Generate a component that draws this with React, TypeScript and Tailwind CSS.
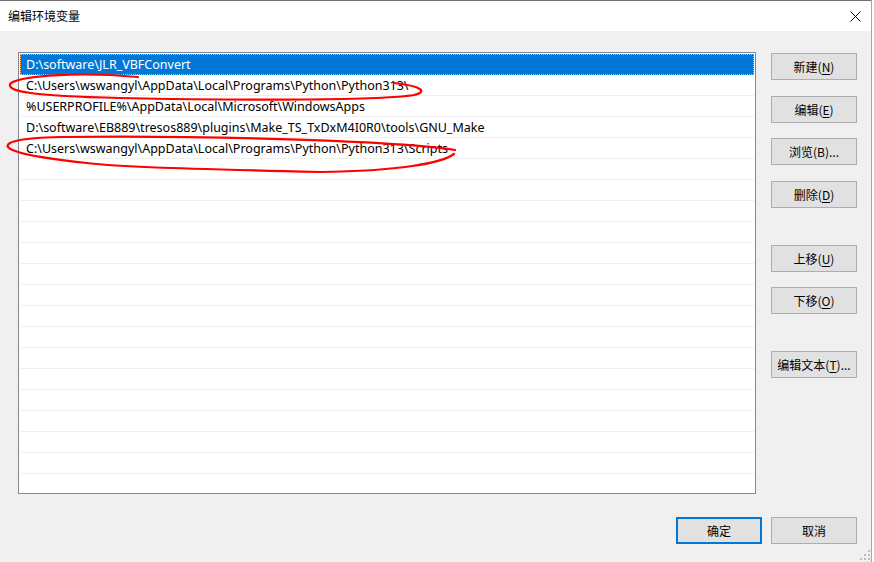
import React from "react";

const FONT = '"Segoe UI", "Noto Sans", "Noto Sans CJK SC", sans-serif';
const CJK = '"Noto Sans CJK SC", "Noto Sans", sans-serif';

const rows = [
  "D:\\software\\JLR_VBFConvert",
  "C:\\Users\\wswangyl\\AppData\\Local\\Programs\\Python\\Python313\\",
  "%USERPROFILE%\\AppData\\Local\\Microsoft\\WindowsApps",
  "D:\\software\\EB889\\tresos889\\plugins\\Make_TS_TxDxM4I0R0\\tools\\GNU_Make",
  "C:\\Users\\wswangyl\\AppData\\Local\\Programs\\Python\\Python313\\Scripts",
];

function Btn({
  label,
  hot,
  tail,
  className = "",
  primary = false,
}: {
  label: string;
  hot?: string;
  tail?: string;
  className?: string;
  primary?: boolean;
}) {
  return (
    <div
      className={
        "w-[86px] h-[27px] bg-[#e1e1e1] flex items-center justify-center text-[12px] text-black " +
        (primary ? "border-2 border-[#0078d7] " : "border border-[#adadad] ") +
        className
      }
      style={{ fontFamily: CJK }}
    >
      <span className="leading-none">
        {label}
        {hot !== undefined && (
          <>
            (<span className="underline underline-offset-2">{hot}</span>){tail}
          </>
        )}
      </span>
    </div>
  );
}

export default function App() {
  const allRows = [...rows, ...Array(16).fill("")];
  return (
    <div className="relative w-[874px] h-[562px] bg-white overflow-hidden" style={{ fontFamily: FONT }}>
      <div className="w-[872px] h-full border-r border-[#a6a6a6] flex flex-col">
        <div className="h-[31px] border-t border-[#707070] bg-white flex items-center justify-between pl-[8px] pr-[10px] shrink-0">
          <span className="text-[12px] text-black leading-none" style={{ fontFamily: CJK }}>
            编辑环境变量
          </span>
          <svg width="11" height="11" viewBox="0 0 11 11">
            <path d="M0.5 0.5 L10.5 10.5 M10.5 0.5 L0.5 10.5" stroke="#000" strokeWidth="1" fill="none" />
          </svg>
        </div>
        <div className="flex-1 bg-[#f0f0f0] flex flex-col pt-[21px] pl-[18px] pr-[14px]">
          <div className="flex">
            <div className="w-[738px] h-[442px] border border-[#828790] bg-white p-[1px] overflow-hidden">
              {allRows.map((r, i) =>
                i === 0 ? (
                  <div
                    key={i}
                    className="h-[21px] bg-[#0078d7] text-white border border-dotted border-[#f5b070] pl-[5px] pt-[1px] flex items-center text-[12.5px] leading-none"
                  >
                    {r}
                  </div>
                ) : (
                  <div
                    key={i}
                    className="h-[21px] border-b border-[#efefef] pl-[6px] pt-[2px] flex items-center text-[12.5px] leading-none text-black"
                  >
                    {r}
                  </div>
                )
              )}
            </div>
            <div className="ml-[15px] w-[86px] flex flex-col">
              <Btn label="新建" hot="N" className="mt-[1px]" />
              <Btn label="编辑" hot="E" className="mt-[16px]" />
              <Btn label="浏览(B)..." className="mt-[15px]" />
              <Btn label="删除" hot="D" className="mt-[16px]" />
              <Btn label="上移" hot="U" className="mt-[37px]" />
              <Btn label="下移" hot="O" className="mt-[15px]" />
              <Btn label="编辑文本" hot="T" tail="..." className="mt-[37px]" />
            </div>
          </div>
          <div className="flex justify-end gap-[9px] mt-[23px]">
            <Btn label="确定" primary />
            <Btn label="取消" />
          </div>
        </div>
      </div>

      <svg className="absolute right-[4px] bottom-[2px]" width="10" height="10" viewBox="0 0 10 10">
        <rect x="8" y="0" width="2" height="2" fill="#bcbcbc" />
        <rect x="4" y="4" width="2" height="2" fill="#bcbcbc" />
        <rect x="8" y="4" width="2" height="2" fill="#bcbcbc" />
        <rect x="0" y="8" width="2" height="2" fill="#bcbcbc" />
        <rect x="4" y="8" width="2" height="2" fill="#bcbcbc" />
        <rect x="8" y="8" width="2" height="2" fill="#bcbcbc" />
      </svg>

      <svg className="absolute left-0 top-0 pointer-events-none" width="874" height="562" viewBox="0 0 874 562">
        <path
          d="M138 77 C 80 72, 25 75, 11 83 C 4 91, 30 96, 120 98 C 250 101, 385 100, 414 95 C 428 92, 422 86, 394 83"
          stroke="#ff0000"
          strokeWidth="2.2"
          fill="none"
          strokeLinecap="round"
        />
        <path
          d="M455 150 C 400 141, 200 135, 60 137 C 20 138, 5 142, 8 147 C 12 152, 30 157, 87 163 C 120 167, 160 168, 320 172 C 400 171, 442 163, 454 154"
          stroke="#ff0000"
          strokeWidth="2.2"
          fill="none"
          strokeLinecap="round"
        />
      </svg>
    </div>
  );
}
